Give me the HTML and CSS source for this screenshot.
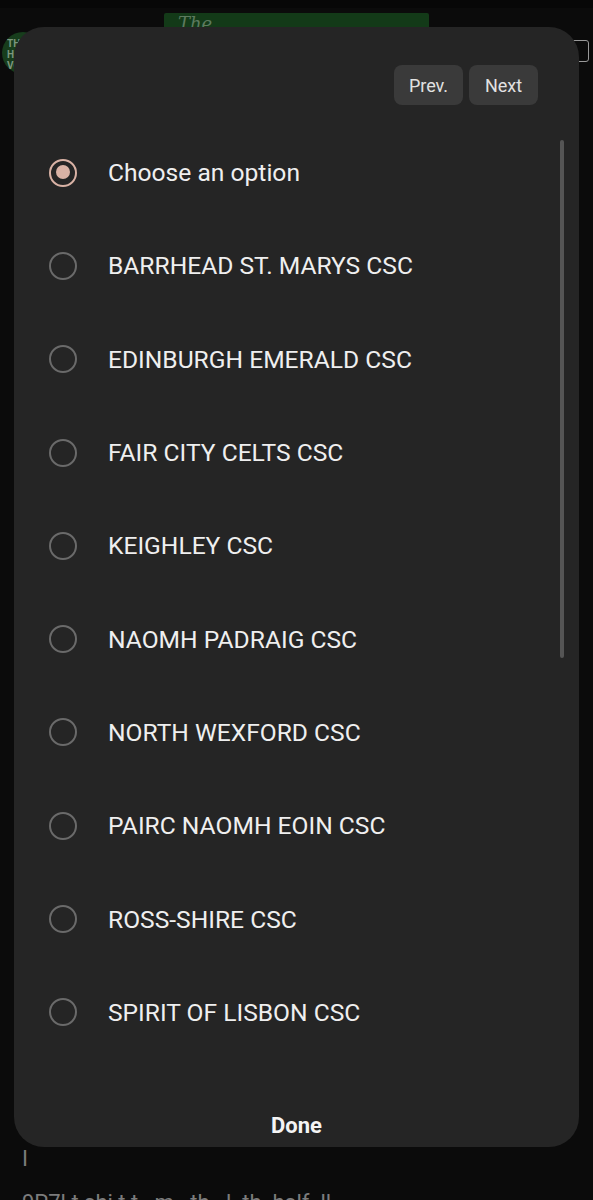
FILE: index.html
```html
<!DOCTYPE html>
<html>
<head>
<meta charset="utf-8">
<link rel="stylesheet" href="styles.css">
</head>
<body>
<div class="page">
  <div class="topstrip"></div>
  <header class="appbar">
    <div class="logo">THE<br>HAI<br>VO</div>
    <div class="banner"><span class="script">The</span></div>
    <div class="headicon"></div>
  </header>
  <div class="filler"></div>
  <p class="bgtext bgtext1">I</p>
  <p class="bgtext bgtext2">9P7l t shi t t   m   th   l  th  half  ll</p>
</div>

<div class="dialog">
  <div class="toolbar">
    <button class="navbtn">Prev.</button>
    <button class="navbtn">Next</button>
  </div>
  <div class="listwrap">
    <ul class="options">
      <li class="option checked"><span class="radio"></span><span class="label">Choose an option</span></li>
      <li class="option"><span class="radio"></span><span class="label">BARRHEAD ST. MARYS CSC</span></li>
      <li class="option"><span class="radio"></span><span class="label">EDINBURGH EMERALD CSC</span></li>
      <li class="option"><span class="radio"></span><span class="label">FAIR CITY CELTS CSC</span></li>
      <li class="option"><span class="radio"></span><span class="label">KEIGHLEY CSC</span></li>
      <li class="option"><span class="radio"></span><span class="label">NAOMH PADRAIG CSC</span></li>
      <li class="option"><span class="radio"></span><span class="label">NORTH WEXFORD CSC</span></li>
      <li class="option"><span class="radio"></span><span class="label">PAIRC NAOMH EOIN CSC</span></li>
      <li class="option"><span class="radio"></span><span class="label">ROSS-SHIRE CSC</span></li>
      <li class="option"><span class="radio"></span><span class="label">SPIRIT OF LISBON CSC</span></li>
    </ul>
    <div class="scrollbar"></div>
  </div>
  <div class="footer">
    <button class="done">Done</button>
  </div>
</div>
</body>
</html>
```
FILE: styles.css
```css
html, body {
  margin: 0;
  padding: 0;
}
body {
  background: #0b0b0b;
  font-family: Roboto, "Liberation Sans", Arial, sans-serif;
  width: 593px;
  height: 1200px;
  overflow: hidden;
  position: relative;
}
.page {
  display: flex;
  flex-direction: column;
  height: 1200px;
}
.topstrip {
  height: 8px;
  background: #070707;
}
.appbar {
  height: 92px;
  display: flex;
  align-items: flex-start;
  position: relative;
}
.logo {
  margin-top: 24px;
  margin-left: 2px;
  width: 42px;
  height: 42px;
  border-radius: 50%;
  background: #173d1c;
  color: #7d967e;
  font-family: Roboto, "Liberation Sans", sans-serif;
  font-size: 10px;
  line-height: 11px;
  font-weight: bold;
  padding: 6px 0 0 5px;
  box-sizing: border-box;
}
.banner {
  margin-top: 5px;
  margin-left: 120px;
  width: 265px;
  height: 30px;
  background: #133a18;
  border-radius: 2px;
}
.script {
  color: #5d7a5f;
  font-family: "DejaVu Serif", serif;
  font-style: italic;
  font-size: 18px;
  margin-left: 14px;
}
.headicon {
  margin-top: 32px;
  margin-left: 140px;
  width: 18px;
  height: 20px;
  border: 1.5px solid #999;
  border-radius: 3px;
}
.filler {
  flex: 1;
}
.bgtext {
  margin: 0;
  color: #7c7c7c;
  font-size: 22px;
  padding-left: 22px;
  white-space: pre;
}
.bgtext1 {
  height: 42px;
  line-height: 30px;
}
.bgtext2 {
  height: 14px;
  overflow: hidden;
  line-height: 34px;
}

.dialog {
  position: absolute;
  left: 14px;
  top: 27px;
  width: 565px;
  height: 1120px;
  background: #252525;
  border-radius: 30px;
  display: flex;
  flex-direction: column;
}
.toolbar {
  display: flex;
  justify-content: flex-end;
  gap: 6px;
  padding: 38px 41px 0 0;
}
.navbtn {
  height: 40px;
  padding: 0 12px;
  min-width: 69px;
  border: none;
  border-radius: 8px;
  background: #3a3a3a;
  color: #e2e2e2;
  font-family: Roboto, "Liberation Sans", Arial, sans-serif;
  font-size: 18px;
}
.listwrap {
  position: relative;
  flex: none;
  margin-top: 21px;
}
.options {
  list-style: none;
  margin: 0;
  padding: 0;
}
.option {
  height: 93.3px;
  display: flex;
  align-items: center;
  padding-left: 35px;
}
.radio {
  width: 28px;
  height: 28px;
  box-sizing: border-box;
  border: 2px solid #6a6a6a;
  border-radius: 50%;
  margin-right: 31px;
  position: relative;
  flex: none;
}
.option.checked .radio {
  border: 2.5px solid #d9b2a5;
}
.option.checked .radio::after {
  content: "";
  position: absolute;
  left: 4.5px;
  top: 4.5px;
  width: 14px;
  height: 14px;
  border-radius: 50%;
  background: #d9b2a5;
}
.label {
  color: #efefef;
  font-size: 24.6px;
}
.scrollbar {
  position: absolute;
  right: 15px;
  top: 14px;
  width: 4px;
  height: 518px;
  border-radius: 2px;
  background: #555;
}
.footer {
  flex: 1;
  display: flex;
  justify-content: center;
  align-items: flex-start;
  padding-top: 54px;
}
.done {
  background: none;
  border: none;
  color: #f4f4f4;
  font-family: Roboto, "Liberation Sans", Arial, sans-serif;
  font-size: 22px;
  line-height: 26px;
  font-weight: bold;
  padding: 0;
}
```
